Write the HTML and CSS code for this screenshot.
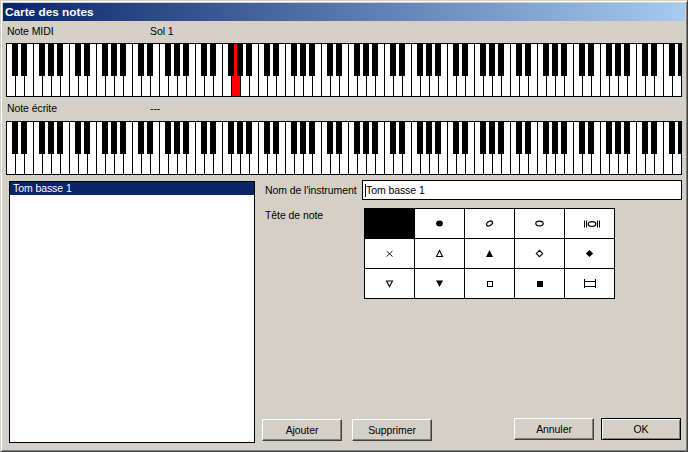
FILE: index.html
```html
<!DOCTYPE html>
<html lang="fr">
<head>
<meta charset="utf-8">
<title>Carte des notes</title>
<link rel="stylesheet" href="styles.css">
</head>
<body>
<svg class="defs" width="0" height="0" aria-hidden="true">
  <defs>
    <pattern id="octave" width="63" height="54" patternUnits="userSpaceOnUse">
      <rect width="63" height="54" fill="#fff"/>
      <path d="M0.5 0V54M9.5 0V54M18.5 0V54M27.5 0V54M36.5 0V54M45.5 0V54M54.5 0V54" stroke="#000" fill="none"/>
      <path d="M6 0h6v33h-6zM15 0h6v33h-6zM33 0h6v33h-6zM42 0h6v33h-6zM51 0h6v33h-6z" fill="#000"/>
    </pattern>
  </defs>
</svg>
<div class="window">
  <div class="titlebar">Carte des notes</div>
  <div class="client">
    <div class="info-row"><span class="info-label">Note MIDI</span><span>Sol 1</span></div>
    <svg class="keyboard" width="676" height="54" viewBox="0 0 676 54" shape-rendering="crispEdges">
      <rect x="0" y="0" width="676" height="54" fill="#000"/>
      <rect x="1" y="1" width="674" height="52" fill="url(#octave)"/>
      <rect x="226" y="33" width="8" height="20" fill="#f00"/>
      <rect x="228" y="1" width="3" height="32" fill="#f00"/>
    </svg>
    <div class="info-row info-row-second"><span class="info-label">Note écrite</span><span>---</span></div>
    <svg class="keyboard" width="676" height="54" viewBox="0 0 676 54" shape-rendering="crispEdges">
      <rect x="0" y="0" width="676" height="54" fill="#000"/>
      <rect x="1" y="1" width="674" height="52" fill="url(#octave)"/>
    </svg>
    <div class="lower">
      <div class="listbox"><div class="list-item">Tom basse 1</div></div>
      <div class="side">
        <div class="name-row">
          <span class="field-label">Nom de l'instrument</span>
          <div class="textbox"><span class="caret"></span>Tom basse 1</div>
        </div>
        <div class="head-row">
          <span class="field-label head-label">Tête de note</span>
          <div class="heads">
            <div class="head selected"></div>
            <div class="head"><svg width="12" height="12" viewBox="0 0 12 12"><ellipse cx="5.5" cy="5.5" rx="3.4" ry="2.9" fill="#000"/></svg></div>
            <div class="head"><svg width="12" height="12" viewBox="0 0 12 12"><ellipse cx="5.5" cy="5.5" rx="3.3" ry="2" transform="rotate(-30 5.5 5.5)" fill="none" stroke="#000" stroke-width="1.2"/></svg></div>
            <div class="head"><svg width="12" height="12" viewBox="0 0 12 12"><ellipse cx="5.5" cy="5.5" rx="3.7" ry="2.4" fill="none" stroke="#000" stroke-width="1.2"/></svg></div>
            <div class="head"><svg width="21" height="12" viewBox="0 0 21 12"><path d="M5.5 2.5V9.5M7.5 2.5V9.5M18.5 2.5V9.5M20.5 2.5V9.5" stroke="#000"/><ellipse cx="13" cy="6" rx="3.8" ry="2.4" fill="none" stroke="#000" stroke-width="1.3"/></svg></div>
            <div class="head"><svg width="12" height="12" viewBox="0 0 12 12"><path d="M2.5 3L8.5 8.5M8.5 3L2.5 8.5" stroke="#000" stroke-width=".9"/></svg></div>
            <div class="head"><svg width="12" height="12" viewBox="0 0 12 12"><path d="M5.5 2.5L8.5 8.5H2.5Z" fill="none" stroke="#000" stroke-width="1.1"/></svg></div>
            <div class="head"><svg width="12" height="12" viewBox="0 0 12 12"><path d="M5.5 2L9 9H2Z" fill="#000"/></svg></div>
            <div class="head"><svg width="12" height="12" viewBox="0 0 12 12"><path d="M5.5 2.3L8.7 5.5L5.5 8.7L2.3 5.5Z" fill="none" stroke="#000" stroke-width="1.1"/></svg></div>
            <div class="head"><svg width="12" height="12" viewBox="0 0 12 12"><path d="M5.5 1.9L9.1 5.5L5.5 9.1L1.9 5.5Z" fill="#000"/></svg></div>
            <div class="head"><svg width="12" height="12" viewBox="0 0 12 12"><path d="M2.5 3H8.5L5.5 8.5Z" fill="none" stroke="#000" stroke-width="1.1"/></svg></div>
            <div class="head"><svg width="12" height="12" viewBox="0 0 12 12"><path d="M2 2.5H9L5.5 9Z" fill="#000"/></svg></div>
            <div class="head"><svg width="12" height="12" viewBox="0 0 12 12" shape-rendering="crispEdges"><rect x="3.5" y="3.5" width="5" height="5" fill="none" stroke="#000"/></svg></div>
            <div class="head"><svg width="12" height="12" viewBox="0 0 12 12" shape-rendering="crispEdges"><rect x="3" y="3" width="6" height="6" fill="#000"/></svg></div>
            <div class="head"><svg width="14" height="12" viewBox="0 0 14 12" shape-rendering="crispEdges"><path d="M1.5 1V10M12.5 1V10M1 3.5H13M1 8.5H13" stroke="#000" fill="none"/></svg></div>
          </div>
        </div>
        <div class="buttons">
          <button class="btn" type="button">Ajouter</button>
          <button class="btn" type="button">Supprimer</button>
          <button class="btn btn-cancel" type="button">Annuler</button>
          <button class="btn btn-default" type="button">OK</button>
        </div>
      </div>
    </div>
  </div>
</div>
</body>
</html>
```
FILE: styles.css
```css
* { box-sizing: border-box; }
html, body { margin: 0; padding: 0; }
body {
  width: 688px;
  height: 452px;
  overflow: hidden;
  background: #d4d0c8;
  font: 10.5px/13px "Liberation Sans", Arial, sans-serif;
  letter-spacing: -0.08px;
  color: #000;
}
.defs { display: block; height: 0; }
.window {
  width: 688px;
  height: 452px;
  display: flex;
  flex-direction: column;
  padding: 2px;
  background: #d4d0c8;
  border: 1px solid;
  border-color: #d4d0c8 #404040 #404040 #d4d0c8;
  box-shadow: inset 1px 1px 0 #fff, inset -1px -1px 0 #808080;
}
.titlebar {
  flex: none;
  height: 18px;
  padding-left: 2px;
  font-weight: bold;
  font-size: 11.8px;
  letter-spacing: 0;
  line-height: 18px;
  color: #fff;
  background: linear-gradient(90deg, #0a246a, #a6caf0);
}
.client {
  flex: 1;
  display: flex;
  flex-direction: column;
  padding: 0 0 0 3px;
}
.info-row {
  display: flex;
  height: 22px;
  padding: 4px 0 0 1px;
}
.info-row-second { height: 24px; padding-top: 5px; }
.info-label { width: 143px; }
.keyboard { display: block; flex: none; }
.lower {
  flex: 1;
  display: flex;
  margin-top: 5px;
  min-height: 0;
}
.listbox {
  flex: none;
  width: 246px;
  height: 262px;
  margin: 1px 0 0 3px;
  background: #fff;
  border: 1px solid #000;
}
.list-item {
  height: 13px;
  padding-left: 3px;
  color: #fff;
  background: #0a246a;
}
.side {
  flex: 1;
  display: flex;
  flex-direction: column;
  padding: 0 0 8px 9px;
}
.name-row {
  display: flex;
  align-items: center;
  height: 20px;
}
.field-label { flex: none; width: 98px; padding-left: 1px; }
.textbox {
  flex: none;
  width: 320px;
  height: 20px;
  padding-left: 2px;
  background: #fff;
  border: 1px solid #000;
  display: flex;
  align-items: center;
}
.caret { width: 1px; height: 13px; background: #000; }
.head-row {
  display: flex;
  margin-top: 8px;
}
.head-label { padding-top: 1px; width: 100px; }
.heads {
  display: grid;
  grid-template-columns: repeat(5, 50px);
  grid-template-rows: repeat(3, 30px);
  width: 251px;
  height: 91px;
  background: #000;
  border: 1px solid #000;
}
.head {
  display: flex;
  align-items: center;
  justify-content: center;
  background: #fff;
  border-right: 1px solid #000;
  border-bottom: 1px solid #000;
}
.head.selected { background: #000; }
.buttons {
  display: flex;
  align-items: flex-end;
  margin: auto 0 0 -2px;
  gap: 10px;
}
.btn {
  flex: none;
  width: 80px;
  height: 22px;
  padding: 0;
  font: inherit;
  letter-spacing: inherit;
  color: #000;
  background: #d4d0c8;
  border: 1px solid;
  border-color: #fff #404040 #404040 #fff;
  box-shadow: inset -1px -1px 0 #808080;
}
.btn-cancel { margin: 0 0 1px 72px; }
.btn-default {
  margin: 0 0 1px -3px;
  border-color: #000;
  box-shadow: inset 1px 1px 0 #fff, inset -1px -1px 0 #808080;
}
```
